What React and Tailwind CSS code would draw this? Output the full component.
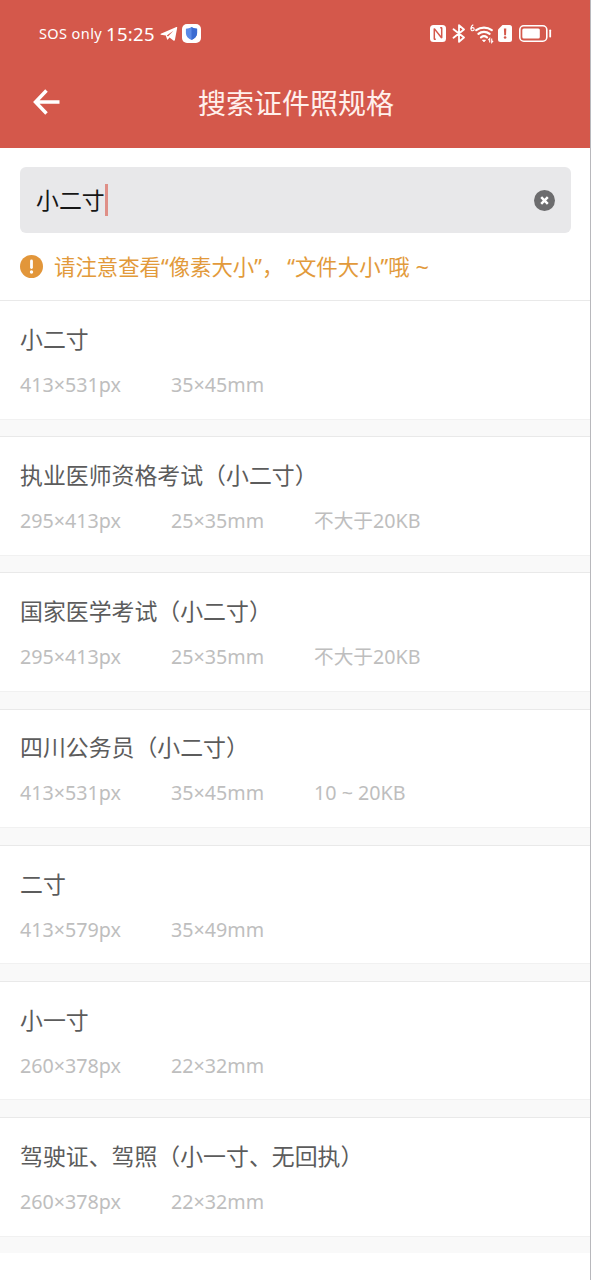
import React from "react";

const SPECS = [
  { id: 1, name: "小二寸", pixels: "413×531px", size: "35×45mm" },
  {
    id: 2,
    name: "执业医师资格考试（小二寸）",
    pixels: "295×413px",
    size: "25×35mm",
    file: "不大于20KB",
  },
  {
    id: 3,
    name: "国家医学考试（小二寸）",
    pixels: "295×413px",
    size: "25×35mm",
    file: "不大于20KB",
  },
  {
    id: 4,
    name: "四川公务员（小二寸）",
    pixels: "413×531px",
    size: "35×45mm",
    file: "10 ~ 20KB",
  },
  { id: 5, name: "二寸", pixels: "413×579px", size: "35×49mm" },
  { id: 6, name: "小一寸", pixels: "260×378px", size: "22×32mm" },
  {
    id: 7,
    name: "驾驶证、驾照（小一寸、无回执）",
    pixels: "260×378px",
    size: "22×32mm",
  },
];

function TelegramIcon() {
  return (
    <svg width="18" height="16" viewBox="0 0 18 16">
      <path
        d="M.8 7.800L16.400 1q1-.3.800.8L14.900 14q-.4 1.300-1.500.5L9.500 11.600l-1.700 1.900q-.6.5-.8-.4L5.800 9.500.8 8.700q-.6-.5 0-.9z"
        fill="#fff"
      />
      <path d="M6.800 9.600l6.600-4.800-5.400 5.800z" fill="#d4584b" />
    </svg>
  );
}

function ShieldBadge() {
  return (
    <svg width="19" height="19" viewBox="0 0 19 19">
      <rect width="19" height="19" rx="5" fill="#fff" />
      <path
        d="M9.500 3c1.800 1.300 3.600 1.600 5.600 1.700v4.600c0 3-2.300 5.200-5.600 6.700-3.300-1.500-5.600-3.700-5.600-6.700V4.700C5.900 4.600 7.700 4.300 9.500 3z"
        fill="#5b8ae6"
      />
      <path d="M9.500 3c1.800 1.300 3.600 1.600 5.600 1.700v4.600c0 3-2.300 5.200-5.600 6.700z" fill="#3a6bd2" />
    </svg>
  );
}

function NfcIcon() {
  return (
    <svg width="16" height="17" viewBox="0 0 16 17">
      <rect width="16" height="17" rx="3.500" fill="#fff" />
      <path
        d="M5.800 14.200H4.300V3.600L11.700 13V2.800H10.200"
        fill="none"
        stroke="#d4584b"
        strokeWidth="1.500"
        strokeLinejoin="bevel"
      />
    </svg>
  );
}

function BluetoothIcon() {
  return (
    <svg width="14" height="19" viewBox="0 0 14 19" fill="none" stroke="#fff">
      <path
        d="M1.500 5.200L12 13.500 7 17.800V1.200l5 4.300L1.500 13.800"
        strokeWidth="1.800"
        strokeLinejoin="round"
        strokeLinecap="round"
      />
    </svg>
  );
}

function WifiIcon() {
  return (
    <svg width="24" height="20" viewBox="0 0 24 20" fill="none" stroke="#fff">
      <path d="M3.300 .8Q1 1.800 1 5" strokeWidth="1.200" />
      <circle cx="2.600" cy="5.200" r="1.600" strokeWidth="1.100" />
      <path
        d="M6.200 6.200a13 13 0 0 1 15.600 0M8.400 9.900a8.600 8.600 0 0 1 11.200 0M11 13.300a5 5 0 0 1 6 0"
        strokeWidth="2.200"
        strokeLinecap="round"
      />
      <path d="M12.300 16h3.400l-1.700 2z" fill="#fff" strokeWidth=".6" />
      <path d="M19.700 18.500V14.500l-1.400 1.600M21.700 14.500v4l1.400-1.600" strokeWidth="1.100" />
    </svg>
  );
}

function SimAlertIcon() {
  return (
    <svg width="14" height="17" viewBox="0 0 14 17">
      <path
        d="M4.500 0H11.500A2.500 2.500 0 0 1 14 2.500V14.500A2.500 2.500 0 0 1 11.500 17H2.500A2.500 2.500 0 0 1 0 14.500V4.500z"
        fill="#fff"
      />
      <path d="M5.900 3.500h2.400l-.3 6.700H6.200z" fill="#d4584b" />
      <circle cx="7.100" cy="12.500" r="1.300" fill="#d4584b" />
    </svg>
  );
}

function BatteryIcon() {
  return (
    <svg width="33" height="17" viewBox="0 0 33 17">
      <rect x=".8" y=".8" width="27" height="15.400" rx="4" fill="none" stroke="#fff" strokeWidth="1.600" />
      <rect x="3.300" y="3.400" width="17.500" height="10.200" rx="1.500" fill="#fff" />
      <rect x="30.300" y="4.500" width="1.800" height="8" rx=".8" fill="#fff" />
    </svg>
  );
}

function StatusBar() {
  return (
    <div className="flex h-[67px] items-center justify-between pr-[38px] pl-[39px] text-white">
      <div className="flex items-center">
        <span className="w-[67px] text-[14.500px] tracking-[0.400px] whitespace-nowrap">SOS only</span>
        <span className="w-[54px] text-[18.500px] tracking-[0.300px]">15:25</span>
        <TelegramIcon />
        <span className="ml-[4px]">
          <ShieldBadge />
        </span>
      </div>
      <div className="flex items-center">
        <NfcIcon />
        <span className="ml-[6px]">
          <BluetoothIcon />
        </span>
        <span className="ml-[4px]">
          <WifiIcon />
        </span>
        <span className="ml-[4px]">
          <SimAlertIcon />
        </span>
        <span className="ml-[7px]">
          <BatteryIcon />
        </span>
      </div>
    </div>
  );
}

function SpecRow({ spec }) {
  return (
    <li className="h-[136.200px] bg-[#f9f9f9]">
      <div className="h-[119.500px] border-y border-t-[#e9e9e9] border-b-[#f1f1f1] bg-white px-5 pt-[22.800px]">
        <h2 className="text-[22.900px] leading-[32px] text-[#5c5c5c]">{spec.name}</h2>
        <div className="mt-[15px] grid grid-cols-[151px_143px_1fr] text-[19.700px] leading-[28px] text-[#bebebe]">
          <span>{spec.pixels}</span>
          <span>{spec.size}</span>
          <span>{spec.file}</span>
        </div>
      </div>
    </li>
  );
}

export default function App() {
  const [query, setQuery] = React.useState("小二寸");

  return (
    <div className="h-screen overflow-hidden border-r border-[#b8b8bc] bg-white font-['Noto_Sans','Noto_Sans_CJK_SC',sans-serif]">
      <header className="h-[148px] bg-[#d4584b]">
        <StatusBar />
        <div className="grid h-[70px] grid-cols-[60px_1fr_60px] items-center">
          <button type="button" className="pl-[33px]">
            <svg width="27" height="26" viewBox="0 0 27 26" fill="none" stroke="#fff" strokeWidth="3.500">
              <path d="M13.500 1.500L2.500 13l11 11.500M2.500 13h24" />
            </svg>
          </button>
          <h1 className="pt-0.5 pl-0.5 text-center text-[28px] leading-[40px] text-[#fff0ec]">
            搜索证件照规格
          </h1>
        </div>
      </header>

      {/* Search field */}
      <div className="px-5 pt-[19px]">
        <div className="mr-[-1px] flex h-[66px] items-center rounded-md bg-[#e8e8ea] pr-4 pl-4">
          <span className="pt-0.5 text-[22.900px] text-[#161616]">{query}</span>
          <span className="h-8 w-[3px] bg-[#df8f87]" />
          <button type="button" className="ml-auto" onClick={() => setQuery("")}>
            <svg width="21" height="21" viewBox="0 0 21 21">
              <circle cx="10.500" cy="10.500" r="10.500" fill="#6c6c6e" />
              <path d="M7.200 7.200l6.600 6.600M13.800 7.200l-6.600 6.600" stroke="#fff" strokeWidth="2.500" />
            </svg>
          </button>
        </div>
      </div>

      {/* Notice */}
      <div className="flex h-[67px] items-center px-5 text-[#e29a3b]">
        <svg width="23" height="23" viewBox="0 0 23 23">
          <circle cx="11.500" cy="11.500" r="11.500" fill="#e2963a" />
          <path d="M11.500 6v6.500" stroke="#fff" strokeWidth="2.800" strokeLinecap="round" />
          <circle cx="11.500" cy="17" r="1.700" fill="#fff" />
        </svg>
        <p className="ml-[11px] pt-0.5 text-[21.400px] whitespace-nowrap">
          请注意查看“像素大小”<span className="tracking-[4px]">，</span>“文件大小”哦
          <span className="ml-[6px] inline-block scale-x-110">~</span>
        </p>
      </div>

      {/* Results */}
      <ul>
        {SPECS.map((spec) => (
          <SpecRow key={spec.id} spec={spec} />
        ))}
      </ul>
    </div>
  );
}
